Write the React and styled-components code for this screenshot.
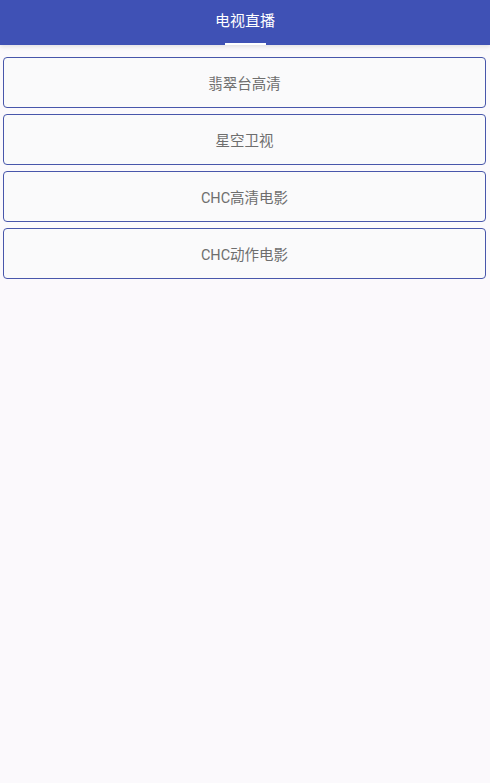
import React from "react";
import styled, { createGlobalStyle } from "styled-components";

const Global = createGlobalStyle`
  html, body { margin: 0; padding: 0; background: #fbf9fc; }
  body { font-family: Roboto, "Noto Sans CJK SC", sans-serif; }
`;

const Page = styled.div`
  width: 490px;
  min-height: 783px;
  background: #fbf9fc;
`;

const Header = styled.header`
  height: 45px;
  background: #3f51b5;
  display: flex;
  flex-direction: column;
  align-items: center;
  justify-content: space-between;
  box-shadow: 0 2px 4px rgba(0, 0, 0, 0.1);
`;

const Title = styled.div`
  color: #ffffff;
  font-size: 15px;
  padding-top: 11px;
  line-height: 20px;
`;

const Indicator = styled.div`
  width: 41px;
  height: 2px;
  background: #ffffff;
`;

const List = styled.div`
  display: flex;
  flex-direction: column;
  gap: 6px;
  padding: 12px 4px 0 3px;
`;

const Channel = styled.button`
  height: 51px;
  border: 1.5px solid #4856ab;
  border-radius: 4px;
  background: #fafafb;
  color: #6e6e6e;
  font-family: Roboto, "Noto Sans CJK SC", sans-serif;
  font-size: 14.5px;
  display: flex;
  align-items: center;
  justify-content: center;
  cursor: pointer;
  padding: 0;
`;

const channels = ["翡翠台高清", "星空卫视", "CHC高清电影", "CHC动作电影"];

export default function App() {
  return (
    <Page>
      <Global />
      <Header>
        <Title>电视直播</Title>
        <Indicator />
      </Header>
      <List>
        {channels.map((c) => (
          <Channel key={c}>{c}</Channel>
        ))}
      </List>
    </Page>
  );
}
